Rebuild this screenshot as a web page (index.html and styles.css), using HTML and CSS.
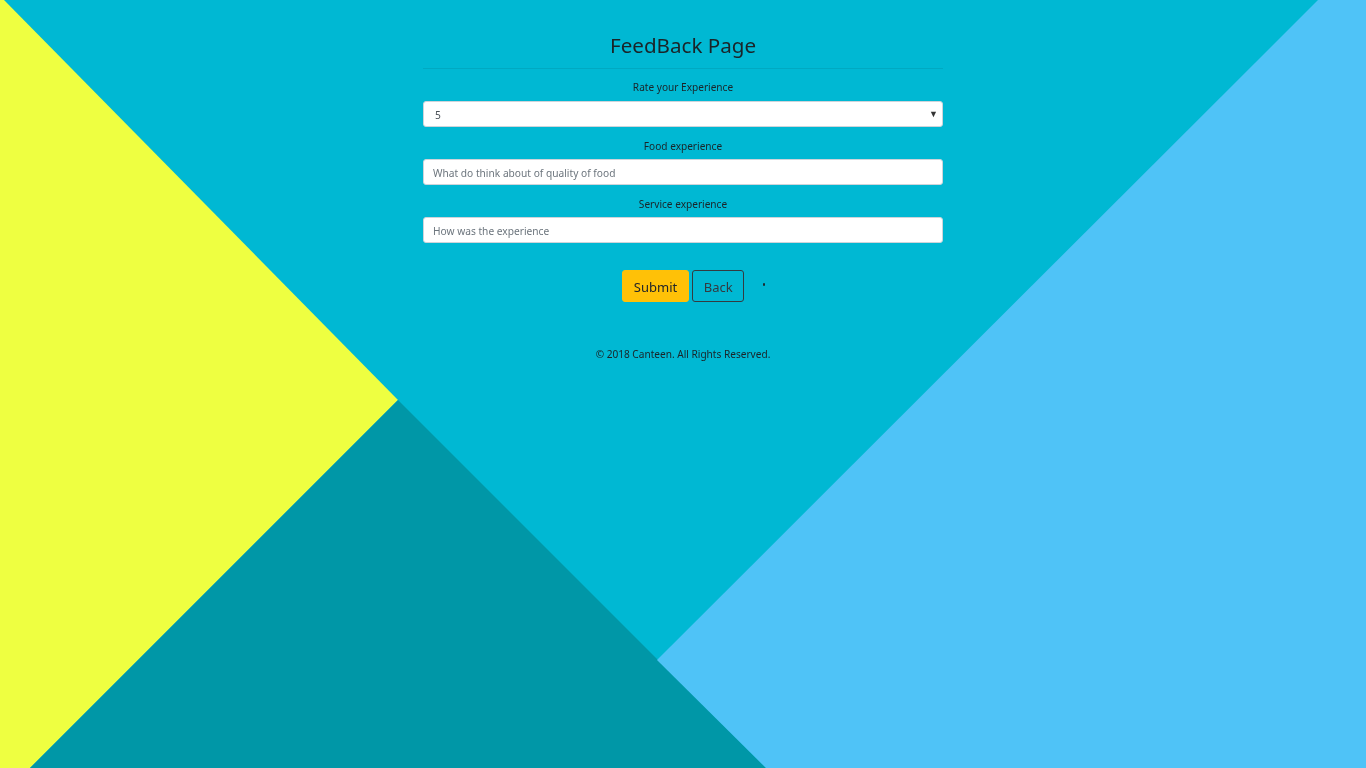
FILE: index.html
```html
<!DOCTYPE html>
<html lang="en">
<head>
<meta charset="utf-8">
<title>FeedBack Page</title>
<link rel="stylesheet" href="styles.css">
</head>
<body>
<svg class="bg" width="1366" height="768" viewBox="0 0 1366 768" preserveAspectRatio="none" aria-hidden="true">
  <rect x="0" y="0" width="1366" height="768" fill="#00b8d3"/>
  <polygon points="0,0 4,0 398,400 30,768 0,768" fill="#eeff41"/>
  <polygon points="398,400 766,768 30,768" fill="#0097a7"/>
  <polygon points="1318,0 1366,0 1366,768 766,768 657,660" fill="#4fc3f7"/>
</svg>
<main class="page">
  <h1 class="title">FeedBack Page</h1>
  <hr class="rule">
  <form class="form">
    <div class="field">
      <label class="label" for="rate">Rate your Experience</label>
      <div class="select-wrap">
        <select id="rate" class="control select">
          <option>5</option><option>4</option><option>3</option><option>2</option><option>1</option>
        </select>
        <span class="caret">&#9660;</span>
      </div>
    </div>
    <div class="field">
      <label class="label" for="food">Food experience</label>
      <input id="food" class="control" type="text" placeholder="What do think about of quality of food">
    </div>
    <div class="field">
      <label class="label" for="service">Service experience</label>
      <input id="service" class="control" type="text" placeholder="How was the experience">
    </div>
    <div class="actions">
      <button type="submit" class="btn btn-warning">Submit</button>
      <button type="button" class="btn btn-outline">Back</button>
      <span class="dot"></span>
    </div>
  </form>
  <p class="footer">© 2018 Canteen. All Rights Reserved.</p>
</main>
</body>
</html>
```
FILE: styles.css
```css
* { box-sizing: border-box; }
html, body { margin: 0; height: 100%; }
body {
  font-family: "Noto Sans", "Open Sans", sans-serif;
  color: #212529;
  background: #00b8d3;
  overflow: hidden;
}
.bg {
  position: fixed;
  left: 0;
  top: 0;
  z-index: 0;
}
.page {
  position: relative;
  z-index: 1;
  width: 520px;
  margin: 0 auto;
  padding-top: 31px;
  display: flex;
  flex-direction: column;
}
.title {
  margin: 0;
  font-size: 20.6px;
  font-weight: 400;
  line-height: 28px;
  text-align: center;
  color: #1a2428;
}
.rule {
  margin: 9px 0 0;
  border: 0;
  border-top: 1px solid rgba(0, 0, 0, 0.08);
}
.form {
  display: flex;
  flex-direction: column;
  gap: 11px;
  margin-top: 10px;
}
.field {
  display: flex;
  flex-direction: column;
  align-items: center;
  gap: 5px;
}
.label {
  font-size: 10.1px;
  line-height: 16px;
  color: #1a2428;
}
.select-wrap {
  position: relative;
  width: 100%;
  margin-top: 1px;
}
.control {
  width: 100%;
  height: 26px;
  border: 1px solid #ced4da;
  border-radius: 3px;
  background: #fff;
  padding: 2px 9px 0;
  font-family: inherit;
  font-size: 10.2px;
  color: #495057;
  outline: none;
}
.control::placeholder { color: #6c757d; opacity: 1; }
.select {
  appearance: none;
  -webkit-appearance: none;
  padding-left: 11px;
}
.caret {
  position: absolute;
  right: 5px;
  top: 8px;
  font-size: 9px;
  line-height: 10px;
  color: #333;
  pointer-events: none;
}
.actions {
  display: flex;
  justify-content: center;
  align-items: center;
  gap: 3px;
  margin-top: 16px;
  position: relative;
}
.btn {
  height: 32px;
  border-radius: 3px;
  font-family: inherit;
  font-size: 13px;
  padding: 2px 10.5px 0 11px;
  line-height: 28px;
  cursor: pointer;
}
.btn-warning {
  background: #ffc107;
  border: 1px solid #ffc107;
  color: #212529;
}
.btn-outline {
  background: transparent;
  border: 1px solid #343a40;
  color: #343a40;
}
.dot {
  position: absolute;
  left: calc(50% + 80px);
  top: 13px;
  width: 2px;
  height: 3px;
  background: #1d2b30;
  border-radius: 1px;
}
.footer {
  margin: 44px 0 0;
  text-align: center;
  font-size: 10.1px;
  line-height: 16px;
  color: #1a2428;
}
```
